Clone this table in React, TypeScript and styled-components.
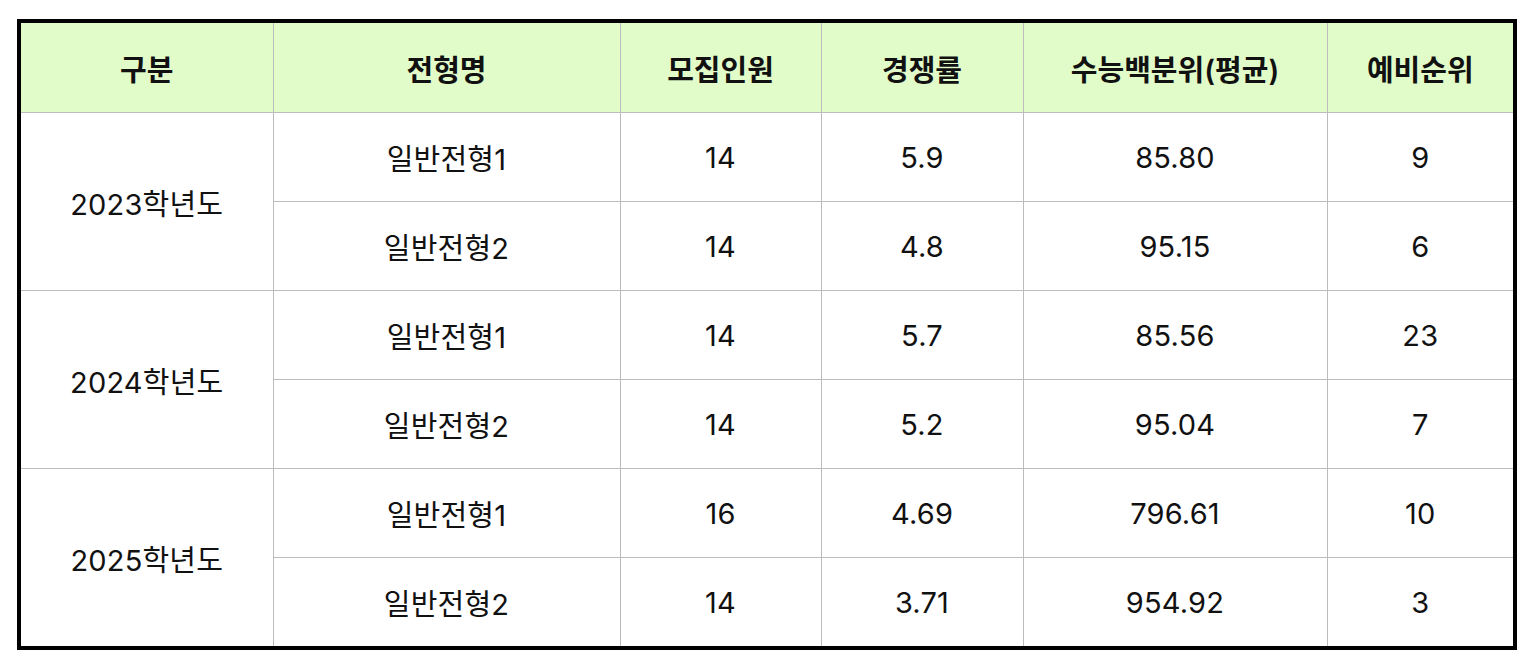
import styled, { createGlobalStyle } from "styled-components";

interface Row {
  year?: string;
  name: string;
  count: string;
  rate: string;
  score: string;
  wait: string;
}

const GlobalStyle = createGlobalStyle`
  body {
    margin: 0;
    background: #ffffff;
    font-family: "Inter", "Noto Sans CJK KR", sans-serif;
  }
`;

const Page = styled.div`
  padding: 19px 0 0 17px;
`;

const Frame = styled.div`
  width: 1492px;
  border: 4px solid #000000;
`;

const Table = styled.table`
  width: 1492px;
  border-collapse: collapse;
  border-style: hidden;
  table-layout: fixed;
`;

const HeadCell = styled.th`
  height: 89px;
  padding: 0;
  background: #e2fcc9;
  border: 1px solid #bcbcbc;
  font-size: 29px;
  font-weight: 600;
  color: #111111;
  text-align: center;
  vertical-align: middle;
`;

const Cell = styled.td`
  height: 88px;
  padding: 0;
  border: 1px solid #bcbcbc;
  font-size: 29px;
  font-weight: 400;
  color: #111111;
  text-align: center;
  vertical-align: middle;
  letter-spacing: 0.2px;
`;

const widths = [252, 347, 201, 202, 304, 186];
const headers = ["구분", "전형명", "모집인원", "경쟁률", "수능백분위(평균)", "예비순위"];

const rows: Row[] = [
  { year: "2023학년도", name: "일반전형1", count: "14", rate: "5.9", score: "85.80", wait: "9" },
  { name: "일반전형2", count: "14", rate: "4.8", score: "95.15", wait: "6" },
  { year: "2024학년도", name: "일반전형1", count: "14", rate: "5.7", score: "85.56", wait: "23" },
  { name: "일반전형2", count: "14", rate: "5.2", score: "95.04", wait: "7" },
  { year: "2025학년도", name: "일반전형1", count: "16", rate: "4.69", score: "796.61", wait: "10" },
  { name: "일반전형2", count: "14", rate: "3.71", score: "954.92", wait: "3" },
];

export default function App() {
  return (
    <Page>
      <GlobalStyle />
      <Frame>
        <Table>
          <colgroup>
            {widths.map((w, i) => (
              <col key={i} style={{ width: w }} />
            ))}
          </colgroup>
          <thead>
            <tr>
              {headers.map((h) => (
                <HeadCell key={h}>{h}</HeadCell>
              ))}
            </tr>
          </thead>
          <tbody>
            {rows.map((r, i) => (
              <tr key={i}>
                {r.year ? <Cell rowSpan={2}>{r.year}</Cell> : null}
                <Cell>{r.name}</Cell>
                <Cell>{r.count}</Cell>
                <Cell>{r.rate}</Cell>
                <Cell>{r.score}</Cell>
                <Cell>{r.wait}</Cell>
              </tr>
            ))}
          </tbody>
        </Table>
      </Frame>
    </Page>
  );
}
